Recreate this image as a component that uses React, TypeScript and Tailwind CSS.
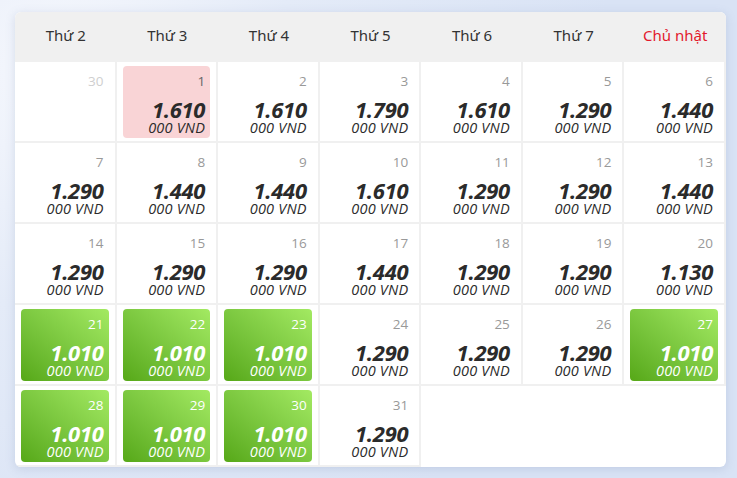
type Day = {
  day: number;
  price?: string;
  kind?: "muted" | "pink" | "green" | "normal";
};

const weekdays = ["Thứ 2", "Thứ 3", "Thứ 4", "Thứ 5", "Thứ 6", "Thứ 7", "Chủ nhật"];

const days: Day[] = [
  { day: 30, kind: "muted" },
  { day: 1, price: "1.610", kind: "pink" },
  { day: 2, price: "1.610" },
  { day: 3, price: "1.790" },
  { day: 4, price: "1.610" },
  { day: 5, price: "1.290" },
  { day: 6, price: "1.440" },
  { day: 7, price: "1.290" },
  { day: 8, price: "1.440" },
  { day: 9, price: "1.440" },
  { day: 10, price: "1.610" },
  { day: 11, price: "1.290" },
  { day: 12, price: "1.290" },
  { day: 13, price: "1.440" },
  { day: 14, price: "1.290" },
  { day: 15, price: "1.290" },
  { day: 16, price: "1.290" },
  { day: 17, price: "1.440" },
  { day: 18, price: "1.290" },
  { day: 19, price: "1.290" },
  { day: 20, price: "1.130" },
  { day: 21, price: "1.010", kind: "green" },
  { day: 22, price: "1.010", kind: "green" },
  { day: 23, price: "1.010", kind: "green" },
  { day: 24, price: "1.290" },
  { day: 25, price: "1.290" },
  { day: 26, price: "1.290" },
  { day: 27, price: "1.010", kind: "green" },
  { day: 28, price: "1.010", kind: "green" },
  { day: 29, price: "1.010", kind: "green" },
  { day: 30, price: "1.010", kind: "green" },
  { day: 31, price: "1.290" },
];

const DayCell: React.FC<{ d: Day }> = ({ d }) => {
  const box =
    d.kind === "green"
      ? "bg-gradient-to-tr from-[#56a816] to-[#a3ea62] text-white"
      : d.kind === "pink"
        ? "bg-[#f9d4d6] text-[#2b2b2b]"
        : "text-[#2b2b2b]";
  const num =
    d.kind === "green"
      ? "text-white"
      : d.kind === "muted"
        ? "text-[#cfcfcf]"
        : d.kind === "pink"
          ? "text-[#666]"
          : "text-[#999]";

  return (
    <div className="h-[81px] border-r-2 border-b-2 border-[#f0f0f0] px-[6px] pt-[4px] pb-[3px]">
      <div className={`h-full rounded-[4px] flex flex-col items-end justify-between pr-[5px] pt-[7px] pb-[3px] ${box}`}>
        <div className={`text-[13.5px] leading-[16px] ${num}`}>{d.day}</div>
        {d.price && (
          <div className="flex flex-col items-end">
            <div className="text-[22px] leading-[21px] font-bold italic tracking-[-0.3px]">{d.price}</div>
            <div className="text-[14.5px] leading-[15px] italic tracking-[0.2px]">000 VND</div>
          </div>
        )}
      </div>
    </div>
  );
};

export default function App() {
  return (
    <div
      className="w-[737px] h-[478px] overflow-hidden bg-[radial-gradient(circle_at_8%_15%,#f6f8fd_0%,#e4ebf8_30%,#d9e3f5_70%)] pt-[12px] pl-[15px]"
      style={{ fontFamily: '"Noto Sans", "Open Sans", sans-serif' }}
    >
      <div className="w-[711px] bg-white rounded-[6px] overflow-hidden shadow-[0_2px_10px_rgba(120,140,180,0.25)]">
        <div className="grid grid-cols-7 h-[50px] pb-[3px] bg-[#f0f0f0]">
          {weekdays.map((w, i) => (
            <div
              key={w}
              className={`flex items-center justify-center text-[15px] ${i === 6 ? "text-[#e3192c]" : "text-[#333]"}`}
            >
              {w}
            </div>
          ))}
        </div>
        <div className="grid grid-cols-7" style={{ fontFamily: '"Open Sans", "Noto Sans", sans-serif' }}>
          {days.map((d, i) => (
            <DayCell key={i} d={d} />
          ))}
        </div>
      </div>
    </div>
  );
}
